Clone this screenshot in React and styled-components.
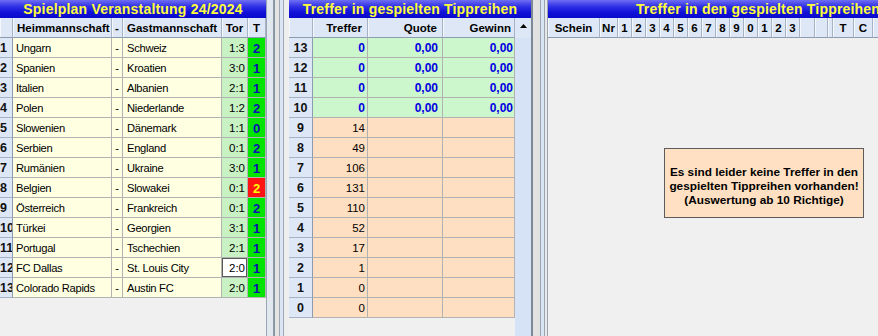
import React from 'react';
import styled, { createGlobalStyle } from 'styled-components';

const Global = createGlobalStyle`
  html, body { margin: 0; padding: 0; background: #f0f0f0; overflow: hidden; }
  body { font-family: "Liberation Sans", Arial, sans-serif; }
  #root { width: 878px; height: 336px; overflow: hidden; }
`;

const Screen = styled.div`
  display: flex;
  width: 980px;
  height: 336px;
  background: #f0f0f0;
`;

const Panel = styled.section`
  flex: 0 0 ${(p) => p.$w}px;
  width: ${(p) => p.$w}px;
  height: 100%;
  display: flex;
  flex-direction: column;
  overflow: hidden;
  border-right: ${(p) => (p.$edge ? `1px solid ${p.$edge}` : 'none')};
  box-sizing: border-box;
`;

const TitleBar = styled.div`
  flex: 0 0 18px;
  height: 18px;
  background: linear-gradient(#6e6ef4 0%, #3232e6 35%, #1010d8 70%, #0a0acc 100%);
  color: #ffff3a;
  font: bold 14px "Liberation Sans", Arial, sans-serif;
  letter-spacing: 0.2px;
  line-height: 19px;
  text-align: center;
  white-space: nowrap;
  overflow: hidden;
`;

const Columns = styled.div`
  display: flex;
  flex: 1;
  min-height: 0;
`;

const Table = styled.div`
  display: flex;
  flex-direction: column;
  flex: ${(p) => (p.$grow ? 1 : '0 0 auto')};
`;

const GridRow = styled.div`
  display: grid;
  grid-template-columns: ${(p) => p.$cols};
  height: 20px;
`;

const HeadCell = styled.div`
  background: #dde7f5;
  border-right: 1px solid #a6b3c6;
  border-bottom: 1px solid #8d9bb0;
  box-shadow: inset 1px 0 0 #f4f8fd;
  box-sizing: border-box;
  font: bold 11.5px "Liberation Sans", Arial, sans-serif;
  color: #000;
  line-height: 21px;
  text-align: ${(p) => p.$align || 'center'};
  padding: 0 ${(p) => p.$pad || 0}px;
  white-space: nowrap;
  overflow: hidden;
`;

const Cell = styled.div`
  background: ${(p) => p.$bg || '#ffffe1'};
  color: ${(p) => p.$fg || '#000'};
  border-right: 1px solid #b2b2b2;
  border-bottom: 1px solid #b2b2b2;
  box-sizing: border-box;
  font-family: "Liberation Sans", Arial, sans-serif;
  font-size: 11.2px;
  letter-spacing: -0.3px;
  line-height: 21px;
  text-align: ${(p) => p.$align || 'left'};
  padding: 0 ${(p) => p.$pad || 0}px;
  white-space: nowrap;
  overflow: hidden;
`;

const RowNum = styled(Cell)`
  background: #dde7f5;
  border-right-color: #8d9bb0;
  border-bottom-color: #a6b3c6;
  font-size: 12.5px;
  font-weight: bold;
  letter-spacing: 0;
  color: #111;
`;

const ScoreCell = styled(Cell)`
  background: ${(p) => (p.$focus ? '#ffffff' : '#c8f2c4')};
  box-shadow: ${(p) => (p.$focus ? 'inset 0 0 0 1px #5a5a5a' : 'none')};
  font-size: 11.5px;
  letter-spacing: 0;
  text-align: right;
  padding-right: 2px;
`;

const TipCell = styled(Cell)`
  background: ${(p) => (p.$lost ? '#ff1414' : '#00e400')};
  color: ${(p) => (p.$lost ? '#ffff00' : '#0a10b4')};
  font-size: 13px;
  font-weight: bold;
  letter-spacing: 0;
  text-align: center;
`;

const ValueCell = styled(Cell)`
  background: ${(p) => (p.$win ? '#ccf6cc' : '#ffdfc2')};
  color: ${(p) => (p.$win ? '#0000e0' : '#000')};
  font-size: ${(p) => (p.$win ? '12px' : '11.5px')};
  font-weight: ${(p) => (p.$win ? 'bold' : 'normal')};
  letter-spacing: 0;
  text-align: right;
`;

const Filler = styled.div`
  flex: 1;
  background: #f0f0f0;
`;

const ScrollBar = styled.div`
  flex: 0 0 16px;
  display: flex;
  flex-direction: column;
  background: #d6e3f6;
`;

const ScrollHead = styled.div`
  height: 20px;
  display: flex;
  align-items: flex-start;
  justify-content: center;
  padding-top: 6px;
  box-sizing: border-box;
  background: #dde7f5;
`;

const Splitter = styled.div`
  flex: 0 0 auto;
  display: flex;
  height: 100%;
`;

const Stripe = styled.div`
  width: ${(p) => p.$w}px;
  background: ${(p) => p.$c};
`;

const Body = styled.div`
  flex: 1;
  display: flex;
  align-items: center;
  justify-content: center;
  padding-bottom: 8px;
`;

const Notice = styled.div`
  width: 200px;
  height: 70px;
  margin-left: 12px;
  box-sizing: border-box;
  background: #ffe0c2;
  border: 1px solid #5c5c5c;
  display: flex;
  align-items: center;
  justify-content: center;
  padding-top: 6px;
  text-align: center;
  font: bold 11.8px "Liberation Sans", Arial, sans-serif;
  line-height: 14px;
  color: #000;
`;

const matches = [
  ['Ungarn', 'Schweiz', '1:3', '2'],
  ['Spanien', 'Kroatien', '3:0', '1'],
  ['Italien', 'Albanien', '2:1', '1'],
  ['Polen', 'Niederlande', '1:2', '2'],
  ['Slowenien', 'Dänemark', '1:1', '0'],
  ['Serbien', 'England', '0:1', '2'],
  ['Rumänien', 'Ukraine', '3:0', '1'],
  ['Belgien', 'Slowakei', '0:1', '2', 'lost'],
  ['Österreich', 'Frankreich', '0:1', '2'],
  ['Türkei', 'Georgien', '3:1', '1'],
  ['Portugal', 'Tschechien', '2:1', '1'],
  ['FC Dallas', 'St. Louis City', '2:0', '1', 'focus'],
  ['Colorado Rapids', 'Austin FC', '2:0', '1'],
];

const hits = [
  [13, '0', '0,00', '0,00', true],
  [12, '0', '0,00', '0,00', true],
  [11, '0', '0,00', '0,00', true],
  [10, '0', '0,00', '0,00', true],
  [9, '14'],
  [8, '49'],
  [7, '106'],
  [6, '131'],
  [5, '110'],
  [4, '52'],
  [3, '17'],
  [2, '1'],
  [1, '0'],
  [0, '0'],
];

const COLS1 = '13px 99px 11px 99px 26px 18px';
const COLS2 = '24px 55px 75px 72px';
const COLS3 =
  '52px 18px ' + Array(13).fill('14px').join(' ') + ' 15px 13px 5px 21px 19px 1fr';

const digits = ['1', '2', '3', '4', '5', '6', '7', '8', '9', '0', '1', '2', '3'];

function UpArrow() {
  return (
    <svg width="7" height="4" viewBox="0 0 7 4">
      <polygon points="3.5,0 7,4 0,4" fill="#000" />
    </svg>
  );
}

export default function App() {
  return (
    <>
      <Global />
      <Screen>
        <Panel $w={267} $edge="#9aa6b6">
          <TitleBar>Spielplan Veranstaltung 24/2024</TitleBar>
          <Table>
            <GridRow $cols={COLS1}>
              <HeadCell />
              <HeadCell $align="left" $pad={4}>Heimmannschaft</HeadCell>
              <HeadCell>-</HeadCell>
              <HeadCell $align="left" $pad={4}>Gastmannschaft</HeadCell>
              <HeadCell>Tor</HeadCell>
              <HeadCell>T</HeadCell>
            </GridRow>
            {matches.map(([home, guest, score, tip, flag], i) => (
              <GridRow key={i} $cols={COLS1}>
                <RowNum $pad={0}>{i + 1}</RowNum>
                <Cell $pad={3}>{home}</Cell>
                <Cell $align="center">-</Cell>
                <Cell $pad={4}>{guest}</Cell>
                <ScoreCell $focus={flag === 'focus'}>{score}</ScoreCell>
                <TipCell $lost={flag === 'lost'}>{tip}</TipCell>
              </GridRow>
            ))}
          </Table>
          <Filler />
        </Panel>

        <Splitter>
          <Stripe $w={6} $c="#e2e8f0" />
          <Stripe $w={2} $c="#8c97a4" />
          <Stripe $w={4} $c="#e4e4e4" />
          <Stripe $w={1} $c="#9ea8b4" />
          <Stripe $w={3} $c="#dbe5f3" />
          <Stripe $w={1} $c="#9ea8b4" />
          <Stripe $w={5} $c="#efefef" />
        </Splitter>

        <Panel $w={242}>
          <TitleBar>Treffer in gespielten Tippreihen</TitleBar>
          <Columns>
            <Table $grow>
              <GridRow $cols={COLS2}>
                <HeadCell />
                <HeadCell $align="right" $pad={5}>Treffer</HeadCell>
                <HeadCell $align="right" $pad={5}>Quote</HeadCell>
                <HeadCell $align="right" $pad={3}>Gewinn</HeadCell>
              </GridRow>
              {hits.map(([n, t, q, g, win]) => (
                <GridRow key={n} $cols={COLS2}>
                  <RowNum $align="center">{n}</RowNum>
                  <ValueCell $win={win} $pad={2}>{t}</ValueCell>
                  <ValueCell $win={win} $pad={4}>{q || ''}</ValueCell>
                  <ValueCell $win={win} $pad={1}>{g || ''}</ValueCell>
                </GridRow>
              ))}
              <Filler />
            </Table>
            <ScrollBar>
              <ScrollHead>
                <UpArrow />
              </ScrollHead>
            </ScrollBar>
          </Columns>
        </Panel>

        <Splitter>
          <Stripe $w={2} $c="#7c8894" />
          <Stripe $w={7} $c="#e2e2e2" />
          <Stripe $w={1} $c="#9aa4b0" />
          <Stripe $w={3} $c="#d8e4f4" />
          <Stripe $w={1} $c="#9aa4b0" />
          <Stripe $w={2} $c="#e8e8e8" />
          <Stripe $w={1} $c="#9aa4b0" />
        </Splitter>

        <Panel $w={420}>
          <TitleBar>Treffer in den gespielten Tippreihen</TitleBar>
          <GridRow $cols={COLS3}>
            <HeadCell>Schein</HeadCell>
            <HeadCell>Nr</HeadCell>
            {digits.map((d, i) => (
              <HeadCell key={i}>{d}</HeadCell>
            ))}
            <HeadCell />
            <HeadCell />
            <HeadCell />
            <HeadCell>T</HeadCell>
            <HeadCell>C</HeadCell>
            <HeadCell />
          </GridRow>
          <Body>
            <Notice>
              Es sind leider keine Treffer in den
              <br />
              gespielten Tippreihen vorhanden!
              <br />
              (Auswertung ab 10 Richtige)
            </Notice>
          </Body>
        </Panel>
      </Screen>
    </>
  );
}
